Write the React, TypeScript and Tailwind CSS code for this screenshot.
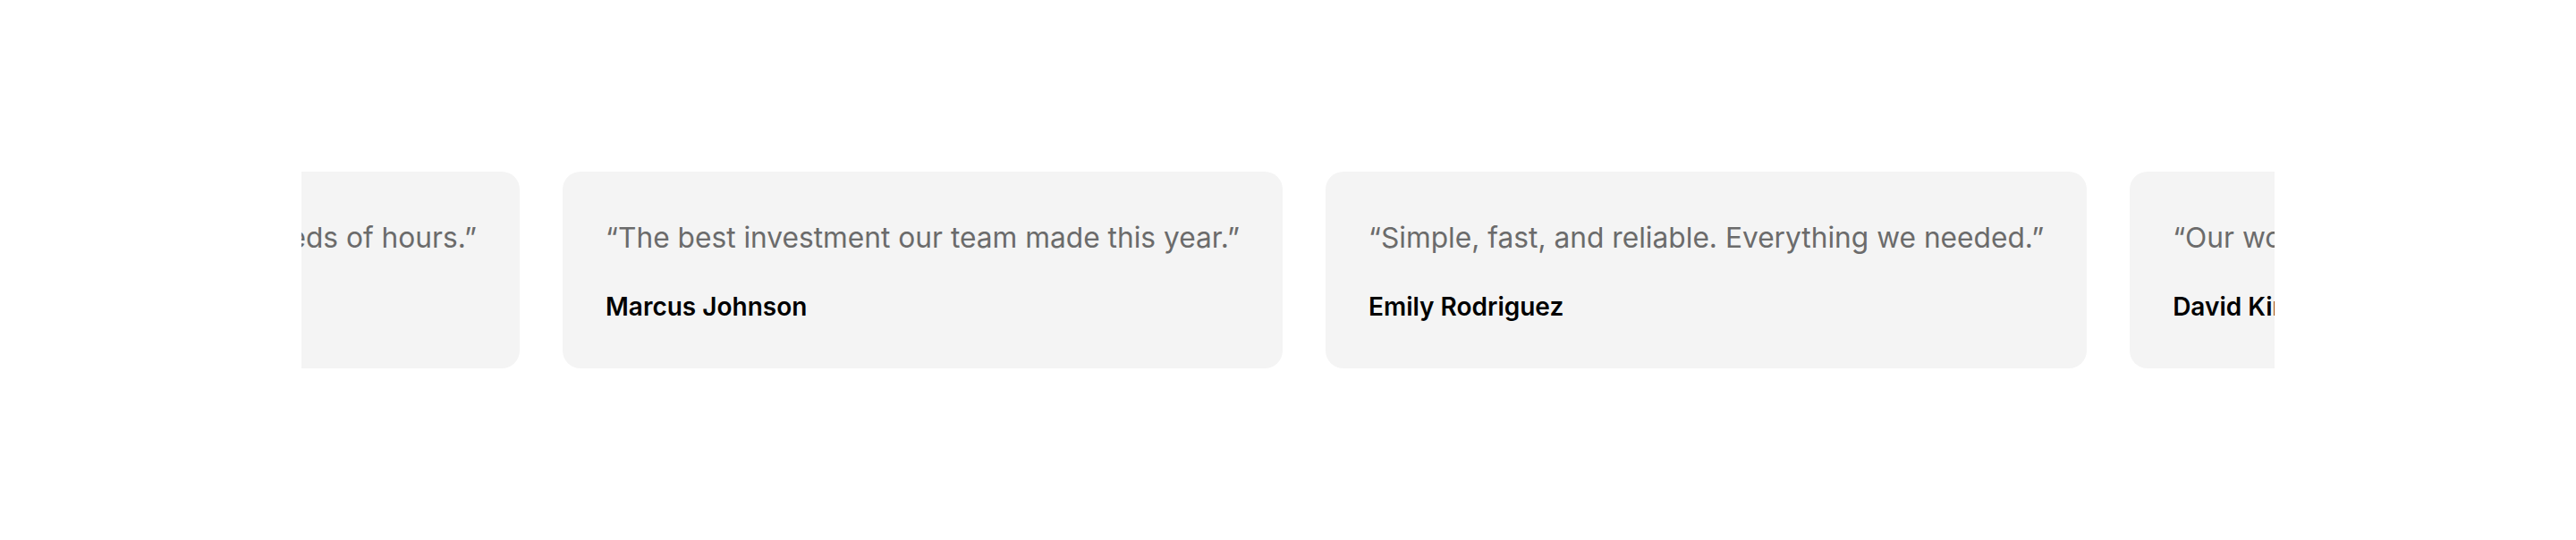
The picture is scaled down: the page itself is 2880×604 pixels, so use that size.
import React from 'react';

const testimonials = [
  { quote: '“It saved our support team hundreds of hours.”', name: 'Sarah Chen' },
  { quote: '“The best investment our team made this year.”', name: 'Marcus Johnson' },
  { quote: '“Simple, fast, and reliable. Everything we needed.”', name: 'Emily Rodriguez' },
  { quote: '“Our workflow has never been this smooth.”', name: 'David Kim' },
];

function Card({ quote, name }: { quote: string; name: string }) {
  return (
    <div className="shrink-0 rounded-[20px] bg-[#f4f4f4] p-12">
      <p className="whitespace-nowrap text-[31.7px] leading-[52px] text-[#6b6b6b]">{quote}</p>
      <p className="mt-[30px] whitespace-nowrap text-[28px] leading-[42px] font-semibold text-black">{name}</p>
    </div>
  );
}

export default function App() {
  const [first, ...rest] = testimonials;
  return (
    <div className="flex h-[604px] w-full items-center bg-white" style={{ fontFamily: 'Inter, "Noto Sans", sans-serif' }}>
      <div className="mx-auto w-[2206px] overflow-hidden">
        <div className="flex gap-12">
          <div className="flex w-[244px] shrink-0 justify-end">
            <Card {...first} />
          </div>
          {rest.map((t) => (
            <Card key={t.name} {...t} />
          ))}
        </div>
      </div>
    </div>
  );
}
